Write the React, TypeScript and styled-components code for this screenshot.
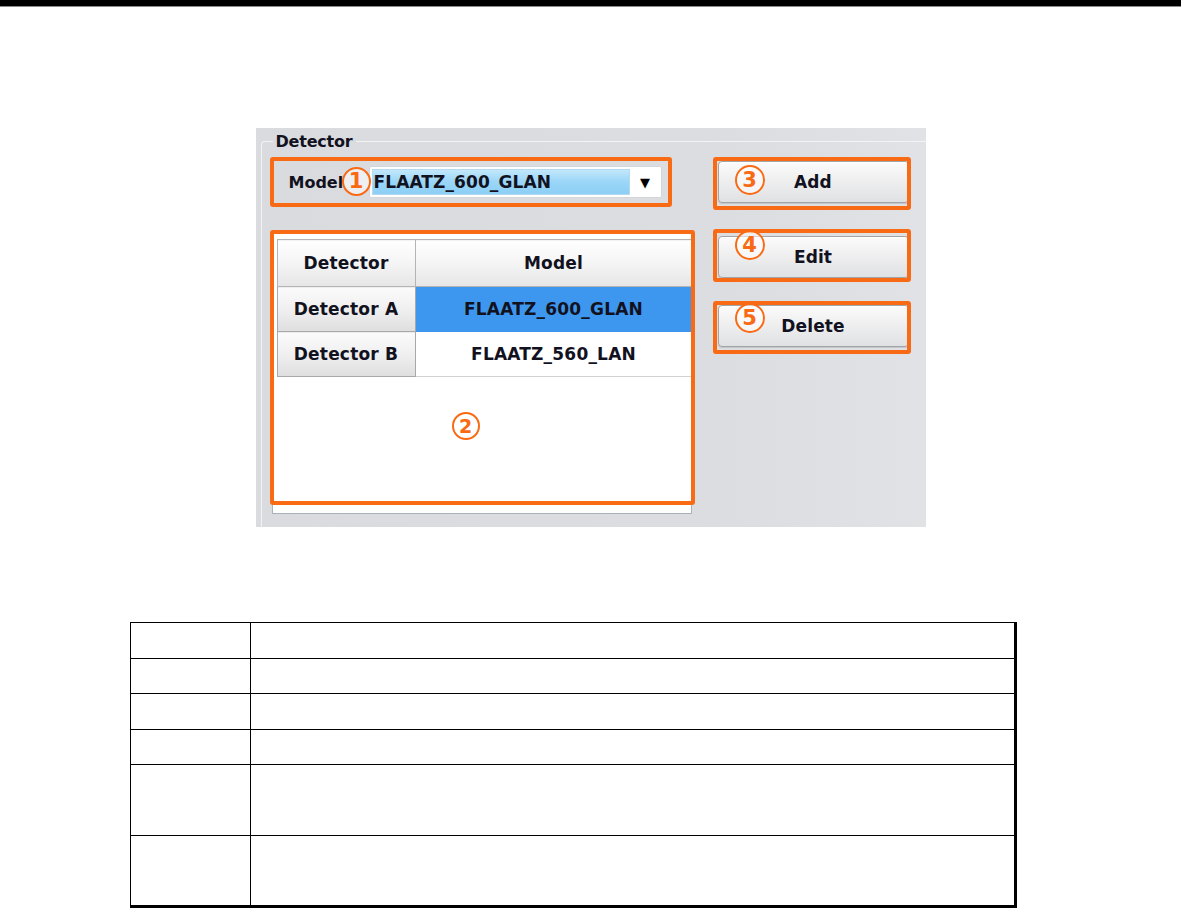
import React from "react";
import styled, { createGlobalStyle } from "styled-components";

const ORANGE = "#f86a14";
const INK = "#12121f";

const GlobalStyle = createGlobalStyle`
  html, body {
    margin: 0;
    padding: 0;
    background: #ffffff;
  }
  body {
    font-family: "DejaVu Sans", "Liberation Sans", sans-serif;
  }
`;

const Page = styled.div`
  width: 1181px;
  min-height: 908px;
  display: flex;
  flex-direction: column;
`;

const TopRule = styled.div`
  height: 6px;
  background: #000;
  border-bottom: 1px solid #8a8a8a;
`;

const Screen = styled.div`
  align-self: center;
  margin-top: 121px;
  width: 670px;
  height: 399px;
  box-sizing: border-box;
  background: linear-gradient(90deg, #dadbdf 0%, #dcdde1 70%, #e1e2e5 100%);
  padding: 0 0 0 5px;
  overflow: hidden;
`;

const Group = styled.fieldset`
  margin: 4px 0 0 0;
  padding: 6px 0 0 8px;
  height: 420px;
  border: 1px solid #f2f3f5;
  border-right: none;
  border-bottom: none;
  border-radius: 4px 0 0 0;
  min-inline-size: auto;
`;

const Legend = styled.legend`
  padding: 0 3px;
  margin-left: 3px;
  font-size: 16px;
  font-weight: bold;
  color: ${INK};
  letter-spacing: -0.2px;
`;

const Columns = styled.div`
  display: grid;
  grid-template-columns: 425px 198px;
  column-gap: 18px;
  align-items: start;
`;

const LeftCol = styled.div`
  display: flex;
  flex-direction: column;
  gap: 23px;
`;

const RightCol = styled.div`
  display: flex;
  flex-direction: column;
  gap: 19px;
`;

const Callout = styled.div<{ $w: number; $h: number }>`
  position: relative;
  width: ${(p) => p.$w}px;
  height: ${(p) => p.$h}px;
  box-sizing: border-box;
  &::after {
    content: "";
    position: absolute;
    inset: 0;
    border: 4px solid ${ORANGE};
    border-radius: 3px;
    pointer-events: none;
    z-index: 2;
  }
`;

const Badge = styled.span<{ $x: number; $y: number; $d?: number }>`
  position: absolute;
  left: ${(p) => p.$x}px;
  top: ${(p) => p.$y}px;
  width: ${(p) => p.$d ?? 30}px;
  height: ${(p) => p.$d ?? 30}px;
  box-sizing: border-box;
  border: 2.5px solid ${ORANGE};
  border-radius: 50%;
  background: rgba(255, 255, 255, 0.55);
  color: ${ORANGE};
  font-family: "DejaVu Sans", sans-serif;
  font-weight: bold;
  font-size: ${(p) => ((p.$d ?? 30) > 28 ? 21 : 19)}px;
  display: flex;
  align-items: center;
  justify-content: center;
  line-height: 1;
  z-index: 3;
`;

const ModelRow = styled.div`
  display: flex;
  align-items: center;
  height: 100%;
  padding-left: 19px;
`;

const Label = styled.span`
  font-size: 16px;
  font-weight: bold;
  color: ${INK};
  width: 80px;
`;

const Combo = styled.div`
  display: flex;
  align-items: stretch;
  width: 293px;
  height: 32px;
  box-sizing: border-box;
  background: #ffffff;
  border: 1px solid #d4d6da;
  border-radius: 2px;
  padding: 2px 0 2px 2px;
`;

const ComboField = styled.div`
  flex: 1;
  display: flex;
  align-items: center;
  padding-left: 1px;
  background: linear-gradient(#c2e7fb, #9ad6f7 50%, #8ccff5);
  border: 1px solid #b5d9ee;
  font-size: 17px;
  font-weight: bold;
  color: ${INK};
  letter-spacing: 0.1px;
`;

const ComboArrow = styled.div`
  width: 31px;
  display: flex;
  align-items: center;
  justify-content: center;
  font-size: 13px;
  color: #000;
`;

const List = styled.div`
  margin: 2px 3px 0 2px;
  height: 282px;
  box-sizing: border-box;
  background: #ffffff;
  border: 1px solid #a7b2bd;
  padding: 6px 1px 0 4px;
`;

const Grid = styled.table`
  border-collapse: collapse;
  width: 413px;
  table-layout: fixed;
  font-size: 17px;
  font-weight: bold;
  color: ${INK};
  letter-spacing: 0.2px;
`;

const HeadCell = styled.th<{ $w: number }>`
  width: ${(p) => p.$w}px;
  height: 46px;
  padding: 0;
  border: 1px solid #b4b4b4;
  background: linear-gradient(#ffffff, #f3f3f3 55%, #e6e6e6);
  text-align: center;
  font-weight: bold;
`;

const RowHead = styled.th`
  height: 44px;
  padding: 0;
  border: 1px solid #a8a8a8;
  background: linear-gradient(#fbfbfb, #eeeeee 55%, #dedede);
  text-align: center;
  font-weight: bold;
`;

const Cell = styled.td<{ $selected?: boolean }>`
  height: 44px;
  padding: 0;
  border: 1px solid ${(p) => (p.$selected ? "#3d94ec" : "#d2d2d2")};
  background: ${(p) => (p.$selected ? "#3e97ef" : "#ffffff")};
  text-align: center;
`;

const Button = styled.div<{ $shift: number }>`
  margin: ${(p) => p.$shift}px 2px 0 5px;
  height: 42px;
  box-sizing: border-box;
  border: 1px solid #a2a4a8;
  border-radius: 4px;
  background: linear-gradient(#fbfbfb, #efeff0 45%, #e0e1e3);
  box-shadow: inset 0 1px 0 #ffffff, 0 1px 0 #c4c6ca;
  display: flex;
  align-items: center;
  justify-content: center;
  font-size: 17px;
  font-weight: bold;
  color: ${INK};
  letter-spacing: 0.1px;
`;

const SpecTable = styled.table`
  margin: 95px 0 0 130px;
  width: 887px;
  border-collapse: collapse;
  border-top: 1px solid #000;
  border-left: 1px solid #000;
  border-right: 3px solid #000;
  border-bottom: 3px solid #000;
`;

const SpecRow = styled.tr<{ $tall?: boolean }>`
  height: ${(p) => (p.$tall ? 71 : 35.5)}px;
`;

const SpecKey = styled.td`
  width: 119px;
  border: 1px solid #000;
  padding: 0;
`;

const SpecValue = styled.td`
  border: 1px solid #000;
  border-right: none;
  padding: 0;
`;

const detectors = [
  { name: "Detector A", model: "FLAATZ_600_GLAN", selected: true },
  { name: "Detector B", model: "FLAATZ_560_LAN", selected: false },
];

const actions = [
  { label: "Add", mark: "3", shift: 4, badgeY: 8 },
  { label: "Edit", mark: "4", shift: 7, badgeY: 1 },
  { label: "Delete", mark: "5", shift: 4, badgeY: 2 },
];

const specRows = [false, false, false, false, true, true];

export default function App() {
  return (
    <Page>
      <GlobalStyle />
      <TopRule />
      <Screen>
        <Group>
          <Legend>Detector</Legend>
          <Columns>
            <LeftCol>
              <Callout $w={402} $h={50}>
                <ModelRow>
                  <Label>Model</Label>
                  <Combo>
                    <ComboField>FLAATZ_600_GLAN</ComboField>
                    <ComboArrow>▼</ComboArrow>
                  </Combo>
                </ModelRow>
                <Badge $x={72} $y={10} $d={29}>1</Badge>
              </Callout>
              <Callout $w={425} $h={275}>
                <List>
                  <Grid>
                    <thead>
                      <tr>
                        <HeadCell $w={137}>Detector</HeadCell>
                        <HeadCell $w={276}>Model</HeadCell>
                      </tr>
                    </thead>
                    <tbody>
                      {detectors.map((d) => (
                        <tr key={d.name}>
                          <RowHead>{d.name}</RowHead>
                          <Cell $selected={d.selected}>{d.model}</Cell>
                        </tr>
                      ))}
                    </tbody>
                  </Grid>
                </List>
                <Badge $x={182} $y={182} $d={28}>2</Badge>
              </Callout>
            </LeftCol>
            <RightCol>
              {actions.map((a) => (
                <Callout key={a.label} $w={198} $h={53}>
                  <Button $shift={a.shift}>{a.label}</Button>
                  <Badge $x={22} $y={a.badgeY}>{a.mark}</Badge>
                </Callout>
              ))}
            </RightCol>
          </Columns>
        </Group>
      </Screen>
      <SpecTable>
        <tbody>
          {specRows.map((tall, i) => (
            <SpecRow key={i} $tall={tall}>
              <SpecKey />
              <SpecValue />
            </SpecRow>
          ))}
        </tbody>
      </SpecTable>
    </Page>
  );
}
